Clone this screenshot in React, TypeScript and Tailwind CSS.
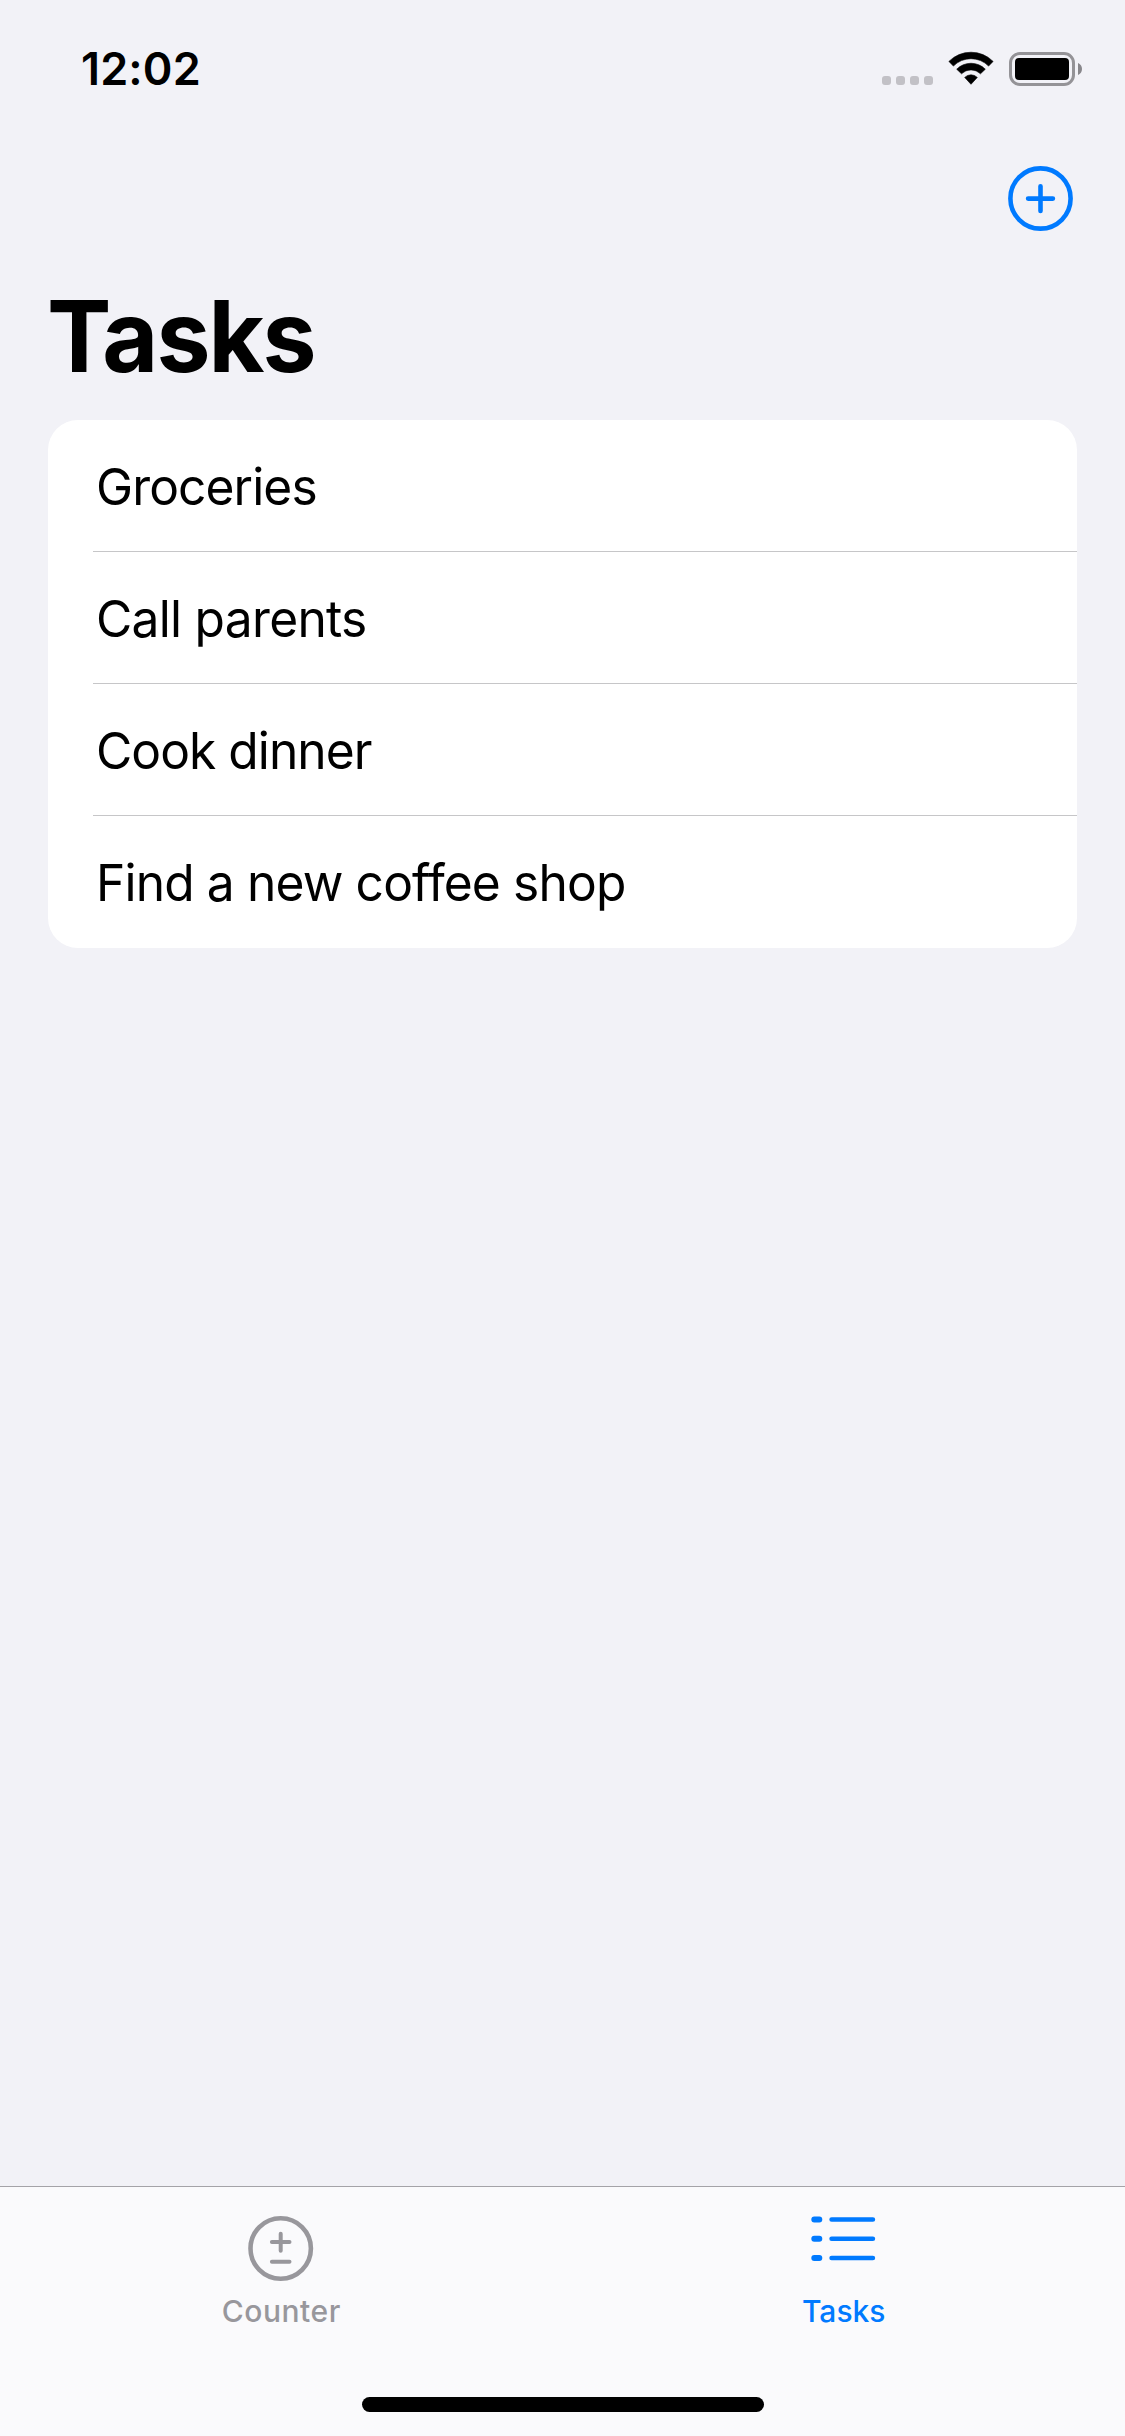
const tasks = [
  { title: "Groceries", tracking: "tracking-[-0.94px]" },
  { title: "Call parents", tracking: "tracking-[-0.76px]" },
  { title: "Cook dinner", tracking: "tracking-[-1px]" },
  { title: "Find a new coffee shop", tracking: "tracking-[-0.9px]" },
];

function WifiIcon() {
  return (
    <svg className="h-[36px] w-[46px]" viewBox="0 0 46 36" stroke="black" strokeWidth="0.6" strokeLinejoin="round">
      <path d="M0.9 10.4A31.2 31.2 0 0 1 45.1 10.4L40.6 15.1A24.6 24.6 0 0 0 5.4 15.1Z" />
      <path d="M8.7 18.2A20.2 20.2 0 0 1 37.3 18.2L32.5 22.8A13.5 13.5 0 0 0 13.5 22.8Z" />
      <path d="M16.7 26.4A9 9 0 0 1 29.3 26.4L23 33.3Z" />
    </svg>
  );
}

function Battery() {
  return (
    <div className="flex items-center gap-[3px]">
      <div className="h-[34px] w-[66px] rounded-[11px] border-3 border-[#949397] p-[3px]">
        <div className="h-full rounded-[4px] bg-black" />
      </div>
      <svg className="h-[12px] w-[4px]" viewBox="0 0 4 12" fill="#88878b">
        <path d="M0 0C2.4 1 4 3.2 4 6S2.4 11 0 12Z" />
      </svg>
    </div>
  );
}

function StatusBar() {
  return (
    <header className="flex h-[132px] justify-between pt-[41px] pr-[43px] pl-[81px]">
      <span className="text-[45px] leading-[55px] font-semibold tracking-[0.15px]">12:02</span>
      <div className="flex h-[55px] pt-[10px]">
        <div className="mt-[25px] flex h-[9px] gap-[5px]">
          {[0, 1, 2, 3].map((dot) => (
            <span key={dot} className="size-[9px] rounded-[3px] bg-[#c2c1c6]" />
          ))}
        </div>
        <div className="ml-[15px]">
          <WifiIcon />
        </div>
        <div className="mt-[1px] ml-[15px] h-[34px]">
          <Battery />
        </div>
      </div>
    </header>
  );
}

function AddButton() {
  return (
    <button aria-label="Add task" className="size-[66px] text-[#007aff]">
      <svg viewBox="0 0 66 66" fill="none" stroke="currentColor" strokeWidth="4.6" strokeLinecap="round">
        <circle cx="32.5" cy="32.5" r="30.1" />
        <path d="M20.1 32.6H44.9M32.5 20.2V45" />
      </svg>
    </button>
  );
}

function CounterIcon() {
  return (
    <svg className="size-[66px]" viewBox="0 0 66 66" fill="none" stroke="currentColor" strokeLinecap="round">
      <circle cx="32.7" cy="32.5" r="30.2" strokeWidth="4.6" />
      <path d="M23.9 26.1H41.5M32.7 17.7V34.8M23.9 45.7H41.5" strokeWidth="4" />
    </svg>
  );
}

function ListIcon() {
  return (
    <svg className="h-[46px] w-[66px]" viewBox="0 0 66 46" fill="none" stroke="currentColor" strokeLinecap="round">
      <path d="M3.3 3.5H8.3M3.3 22.8H8.3M3.3 42H8.3" strokeWidth="6" />
      <path d="M20.6 3.5H61.9M20.6 22.8H61.9M20.6 42H61.9" strokeWidth="4.6" />
    </svg>
  );
}

export default function App() {
  return (
    <div className="flex h-[2436px] w-[1125px] flex-col overflow-hidden bg-[#f2f2f7] font-['Inter',sans-serif] text-black">
      <StatusBar />
      <div className="flex justify-end pt-[34px] pr-[51px]">
        <AddButton />
      </div>
      <h1 className="mt-[44px] ml-[47px] origin-left scale-x-[0.975] text-[99px] leading-[120px] font-bold tracking-[-2.06px]">
        Tasks
      </h1>
      <ul className="mx-[48px] mt-[24px] flex flex-col overflow-hidden rounded-[30px] bg-white">
        {tasks.map((task, i) => (
          <li key={task.title} className="flex h-[132px] pl-[45px]">
            <div className={`grow pt-[36px] pl-[3px] ${i < tasks.length - 1 ? "border-b border-[#c6c6c8]" : ""}`}>
              <span
                className={`block origin-left scale-x-[0.975] text-[51px] leading-[61px] whitespace-nowrap ${task.tracking}`}
              >
                {task.title}
              </span>
            </div>
          </li>
        ))}
      </ul>
      <footer className="mt-auto flex h-[250px] flex-col border-t border-[#a4a3a8] bg-[#fafafc]">
        <nav className="flex pt-[29px] text-[30px] leading-[36px] font-medium">
          <button className="flex h-[113px] flex-1 flex-col items-center justify-between text-[#98979c]">
            <CounterIcon />
            <span className="tracking-[0.53px]">Counter</span>
          </button>
          <button className="flex h-[113px] flex-1 flex-col items-center justify-between text-[#007aff]">
            <ListIcon />
            <span>Tasks</span>
          </button>
        </nav>
        <div className="mx-auto mt-[68px] h-[15px] w-[402px] rounded-full bg-black" />
      </footer>
    </div>
  );
}
